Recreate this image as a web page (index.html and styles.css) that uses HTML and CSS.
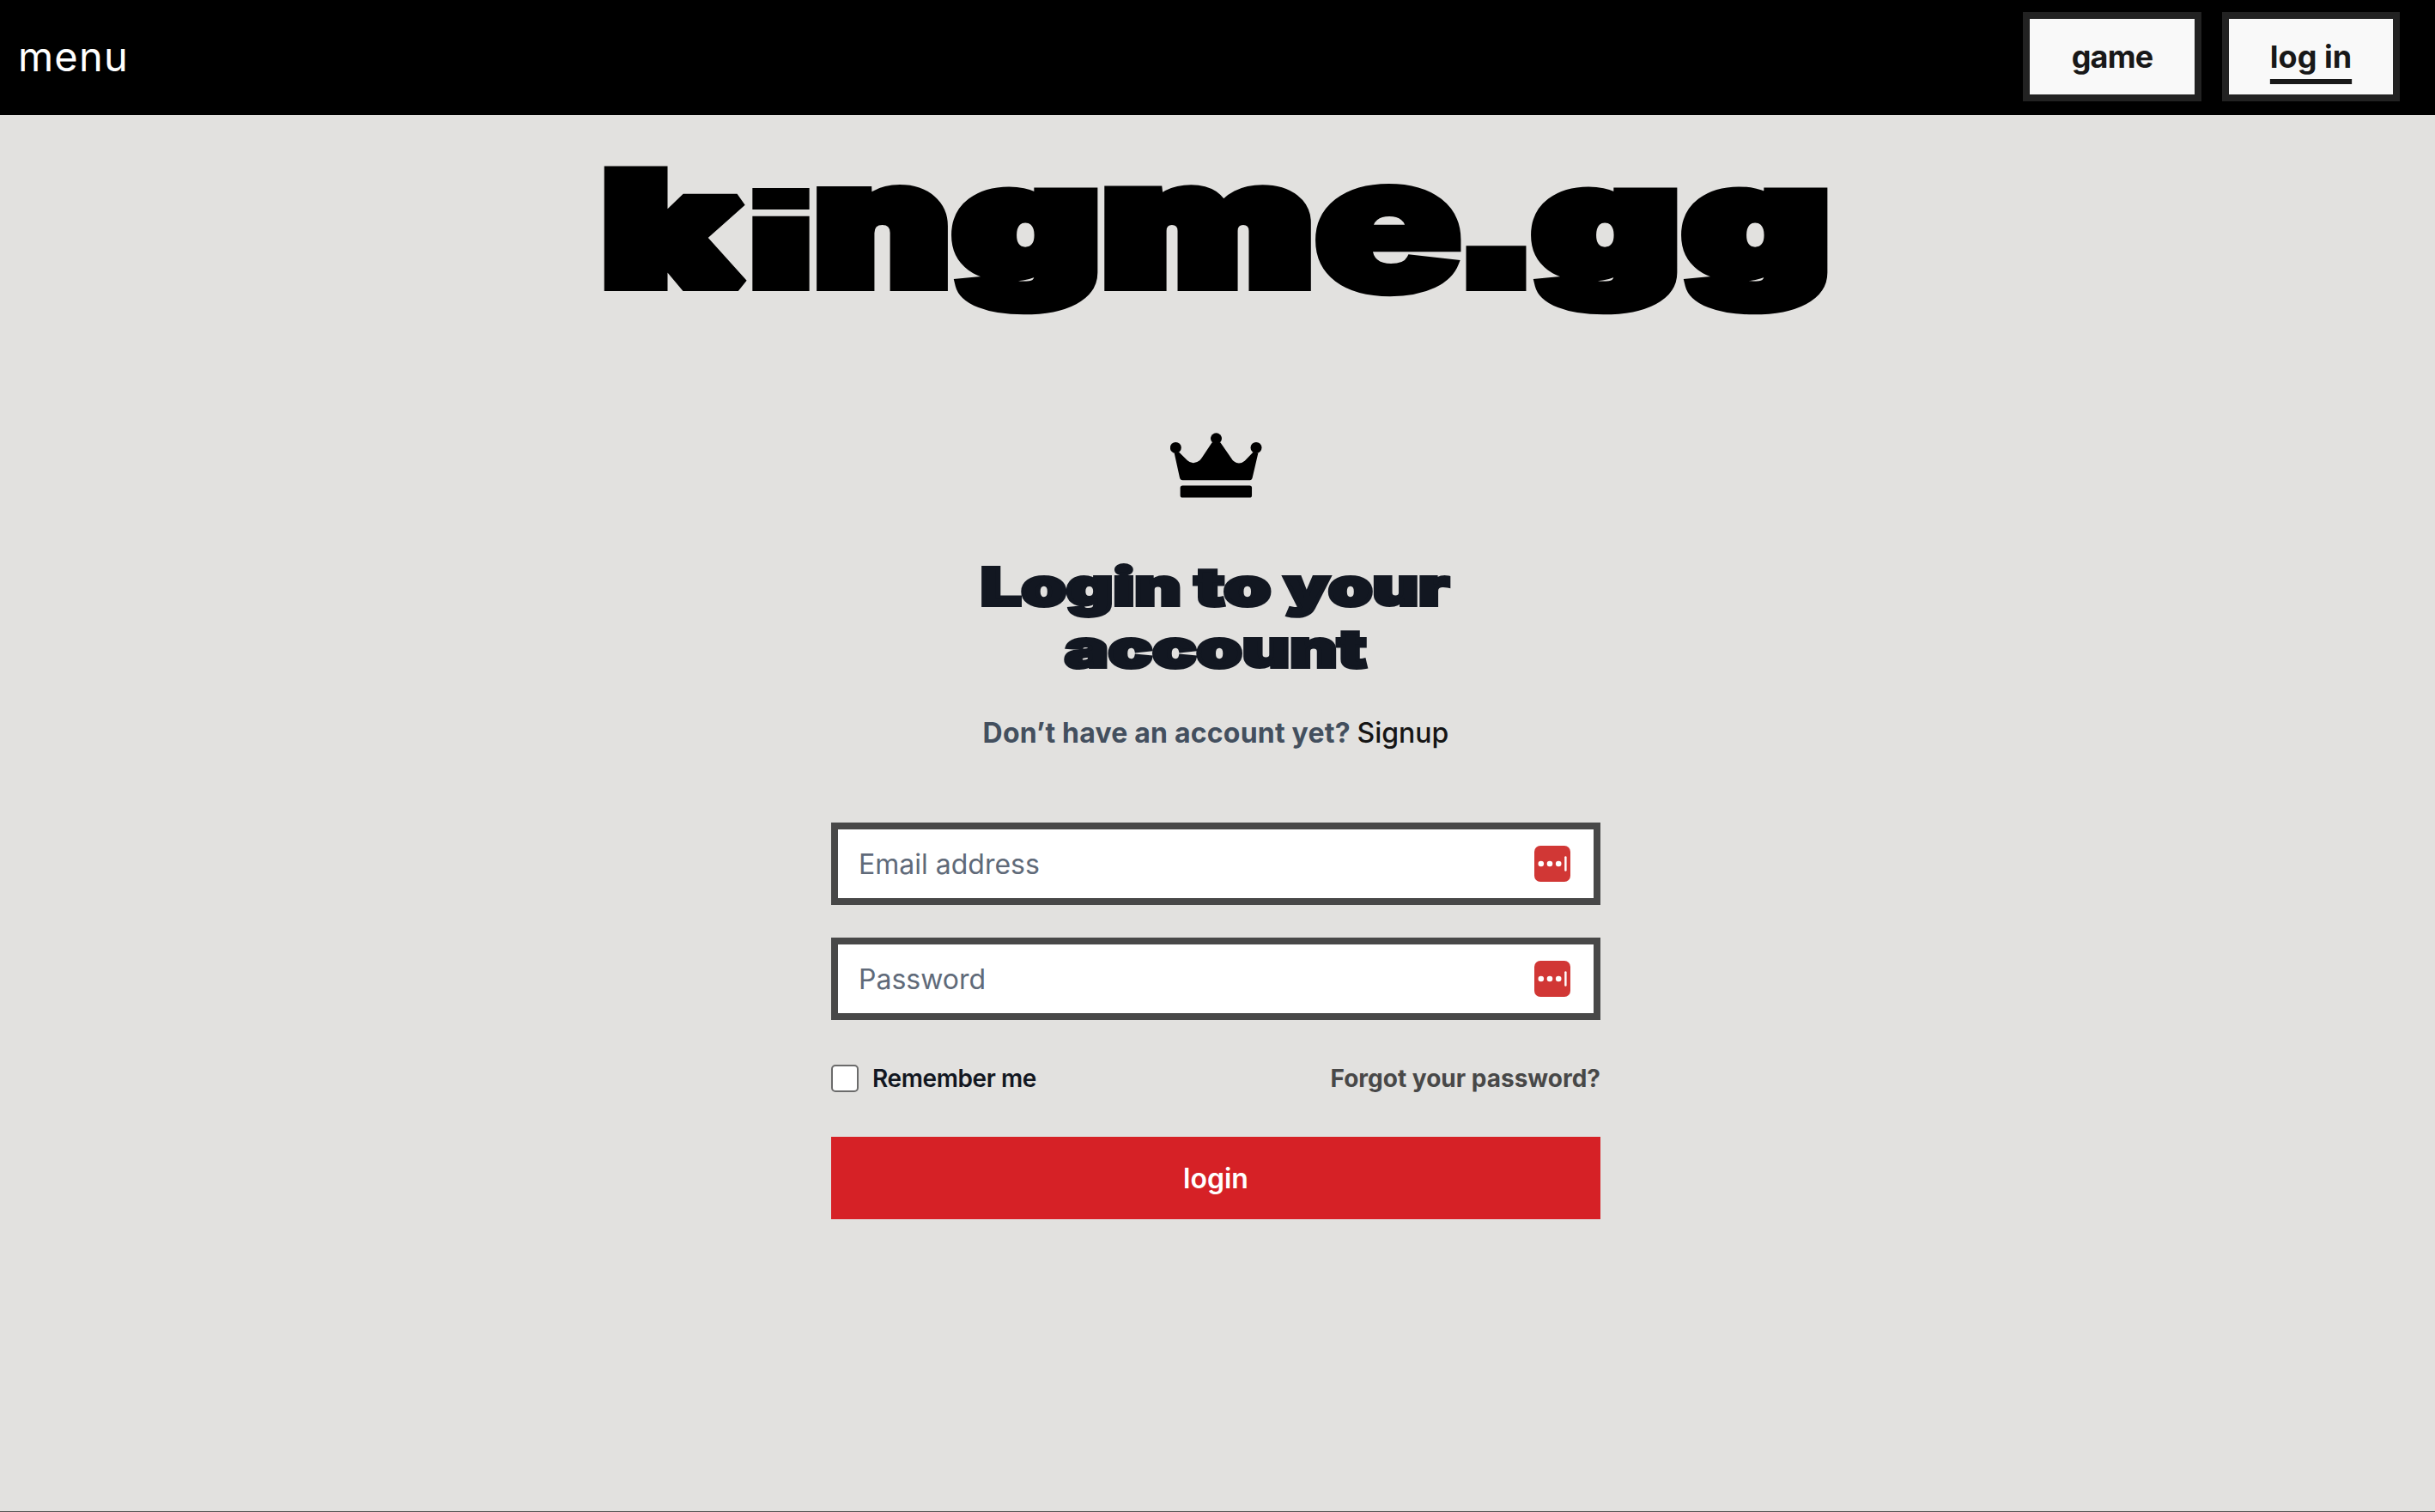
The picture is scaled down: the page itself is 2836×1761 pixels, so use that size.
FILE: index.html
```
<!DOCTYPE html>
<html lang="en">
<head>
  <meta charset="utf-8">
  <title>kingme.gg</title>
  <link rel="stylesheet" href="styles.css">
</head>
<body>
  <header class="topbar">
    <a class="menu">menu</a>
    <nav class="actions">
      <a class="nav-button nav-game">game</a>
      <a class="nav-button nav-login"><span class="current">log in</span></a>
    </nav>
  </header>

  <main class="page">
    <h1 class="wordmark">
      <svg width="1432" height="180" viewBox="700 190 1432 180">
        <text><tspan class="s178" x="702.5" y="331" textLength="156.3" lengthAdjust="spacingAndGlyphs">k</tspan><tspan class="square s154" x="851" y="337.5" textLength="117" lengthAdjust="spacingAndGlyphs">i</tspan><tspan class="s195" x="949" y="331" textLength="157.1" lengthAdjust="spacingAndGlyphs">n</tspan><tspan class="s173" x="1112.2" y="321" textLength="167.1" lengthAdjust="spacingAndGlyphs">g</tspan><tspan class="s195" x="1284" y="331" textLength="245.1" lengthAdjust="spacingAndGlyphs">m</tspan><tspan class="s219" x="1528.6" y="339" textLength="175.8" lengthAdjust="spacingAndGlyphs">e</tspan><tspan class="square s195" x="1691" y="331" textLength="103" lengthAdjust="spacingAndGlyphs">.</tspan><tspan class="s173" x="1787.2" y="321" textLength="167.1" lengthAdjust="spacingAndGlyphs">g</tspan><tspan class="s173" x="1962.2" y="321" textLength="167.1" lengthAdjust="spacingAndGlyphs">g</tspan></text>
      </svg>
    </h1>

    <svg class="crown" width="107" height="76" viewBox="127 72 322 228">
      <circle cx="146" cy="124" r="19.5"/>
      <circle cx="288" cy="92" r="19.5"/>
      <circle cx="428" cy="124" r="19.5"/>
      <path d="M141 142 L158 140 L187 169 Q207 187 230 169 Q234 165 238 159 L273 106 H303 L341 161 Q345 168 350 172 Q369 186 388 170 L417 140 L435 143 L415 229 Q413 238 406 238 H170 Q162 238 160 229 Z"/>
      <rect x="162" y="257" width="251" height="42" rx="8"/>
    </svg>

    <h2 class="heading">
      <svg width="560" height="136" viewBox="1136 656 560 136">
        <text><tspan x="1142" y="704" textLength="233.8" lengthAdjust="spacingAndGlyphs">Login</tspan> <tspan x="1391" y="704" textLength="89.3" lengthAdjust="spacingAndGlyphs">to</tspan> <tspan x="1495.8" y="704" textLength="192.1" lengthAdjust="spacingAndGlyphs">your</tspan> <tspan x="1240" y="776" textLength="351.5" lengthAdjust="spacingAndGlyphs">account</tspan></text>
      </svg>
    </h2>

    <p class="signup">Don’t have an account yet? <a class="signup-link">Signup</a></p>

    <form class="login-form">
      <div class="field">
        <input class="input" type="text" placeholder="Email address">
        <svg class="autofill" width="42" height="42" viewBox="0 0 42 42">
          <rect class="tile" width="42" height="42" rx="7"/>
          <circle cx="7.8" cy="21" r="3.3"/><circle cx="18" cy="21" r="3.3"/><circle cx="28.2" cy="21" r="3.3"/>
          <rect x="35.2" y="12.3" width="2.4" height="17.4" rx="1.2"/>
        </svg>
      </div>
      <div class="field">
        <input class="input" type="password" placeholder="Password">
        <svg class="autofill" width="42" height="42" viewBox="0 0 42 42">
          <rect class="tile" width="42" height="42" rx="7"/>
          <circle cx="7.8" cy="21" r="3.3"/><circle cx="18" cy="21" r="3.3"/><circle cx="28.2" cy="21" r="3.3"/>
          <rect x="35.2" y="12.3" width="2.4" height="17.4" rx="1.2"/>
        </svg>
      </div>
      <div class="options">
        <label class="remember"><input class="checkbox" type="checkbox">Remember me</label>
        <a class="forgot">Forgot your password?</a>
      </div>
      <button class="submit" type="button">login</button>
    </form>
  </main>
</body>
</html>
```
FILE: styles.css
```
* { box-sizing: border-box; }

body {
  margin: 0;
  height: 1761px;
  display: flex;
  flex-direction: column;
  font-family: Inter, "Liberation Sans", sans-serif;
  background: #e2e1df;
  border-bottom: 1px solid #555;
}

.topbar {
  height: 134px;
  padding: 0 41px 2px 21px;
  display: flex;
  align-items: center;
  justify-content: space-between;
  background: #000;
}
.menu { padding-bottom: 2px; color: #fff; font-size: 47px; letter-spacing: 1.2px; }
.actions { display: flex; gap: 24px; }
.nav-button {
  height: 104px;
  border: 8px solid #222;
  background: #f9f9f9;
  color: #181818;
  display: flex;
  align-items: center;
  justify-content: center;
  font-size: 36px;
  font-weight: 700;
}
.nav-game { width: 208px; letter-spacing: -0.8px; }
.nav-login { width: 207px; }
.current {
  text-decoration: underline;
  text-decoration-thickness: 6px;
  text-underline-offset: 13px;
  text-decoration-skip-ink: none;
}

.page {
  padding: 56px 4px 0 0;
  display: flex;
  flex-direction: column;
  align-items: center;
}

.wordmark, .heading { margin: 0; font-weight: 900; line-height: 0; }
.wordmark svg, .heading svg { overflow: visible; }
.wordmark text { font-weight: 900; fill: #000; stroke: #000; stroke-width: 16px; stroke-miterlimit: 2; }
.square { font-family: "DejaVu Sans", sans-serif; font-weight: 700; }
.s154 { font-size: 154px; stroke-width: 3px; }
.s173 { font-size: 173px; }
.s178 { font-size: 178px; }
.s195 { font-size: 195px; }
.s219 { font-size: 219px; stroke-width: 8px; }

.crown { margin-top: 134px; }

.heading { margin-top: 77px; }
.heading text { font-size: 60px; fill: #121721; stroke: #121721; stroke-width: 4px; stroke-miterlimit: 2; }

.signup {
  margin: 37px 0 0;
  font-size: 32px;
  line-height: 48px;
  font-weight: 700;
  letter-spacing: 0.2px;
  color: #434f5e;
}
.signup-link { font-weight: 500; letter-spacing: 0; color: #151515; }

.login-form { width: 896px; margin-top: 80px; display: flex; flex-direction: column; }
.field {
  height: 96px;
  border: 8px solid #484848;
  background: #fff;
  padding: 0 27px 0 24px;
  display: flex;
  align-items: center;
}
.field + .field { margin-top: 38px; }
.input {
  flex: 1;
  padding: 0;
  border: 0;
  outline: 0;
  background: none;
  font: 400 32px Inter, sans-serif;
}
.input::placeholder { color: #606a79; }
.autofill { fill: #fff; }
.tile { fill: #d13735; }

.options {
  margin: 52px 0;
  height: 32px;
  display: flex;
  align-items: center;
  justify-content: space-between;
  font-size: 28px;
}
.remember {
  display: flex;
  align-items: center;
  gap: 16px;
  font-weight: 600;
  letter-spacing: -0.4px;
  color: #121721;
}
.checkbox {
  appearance: none;
  width: 32px;
  height: 32px;
  margin: 0;
  border: 2px solid #6b6b6b;
  border-radius: 5px;
  background: #fff;
}
.forgot { font-weight: 700; color: #484848; }

.submit {
  height: 96px;
  padding: 0;
  border: 0;
  background: #d62126;
  color: #fff;
  font: 600 32px Inter, sans-serif;
}
```
